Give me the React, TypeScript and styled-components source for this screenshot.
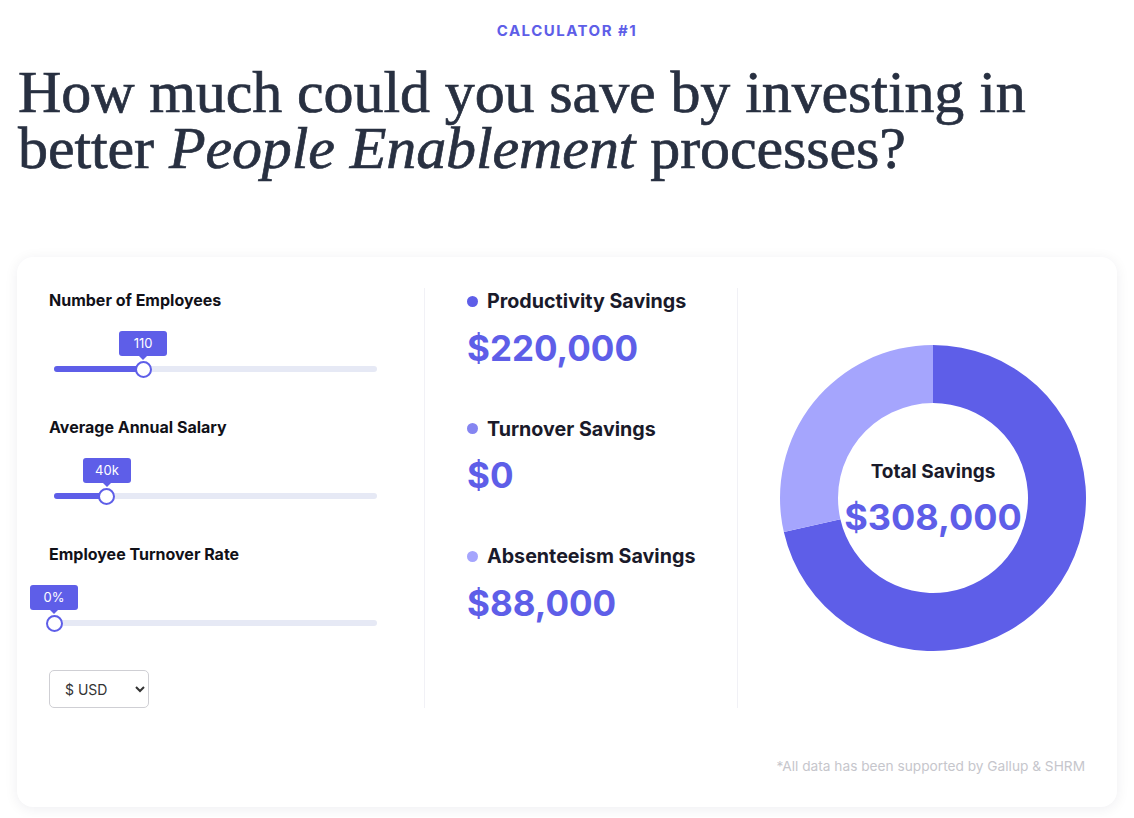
import React from 'react';
import styled, { createGlobalStyle } from 'styled-components';

const GlobalStyle = createGlobalStyle`
  * { box-sizing: border-box; }
  body {
    margin: 0;
    background: #ffffff;
    font-family: Inter, "Noto Sans", sans-serif;
  }
`;

const PURPLE = '#5e5ee8';
const PURPLE_MID = '#8585f1';
const PURPLE_LIGHT = '#a5a5fd';

const Page = styled.div`
  padding: 20px 17px 10px;
`;

const Eyebrow = styled.div`
  text-align: center;
  color: ${PURPLE};
  font-size: 15px;
  font-weight: 700;
  letter-spacing: 1.5px;
  line-height: 22px;
`;

const Headline = styled.h1`
  margin: 22px 0 0 1px;
  font-family: "Liberation Serif", serif;
  font-weight: 400;
  font-size: 60px;
  line-height: 56px;
  color: #283041;
  letter-spacing: -0.1px;
  -webkit-text-stroke: 0.7px #283041;
`;

const Card = styled.section`
  margin-top: 81px;
  background: #ffffff;
  border-radius: 16px;
  box-shadow: 0 2px 14px rgba(20, 20, 60, 0.07);
  padding: 31px 32px 33px;
`;

const Columns = styled.div`
  display: grid;
  grid-template-columns: 375px 313px 1fr;
`;

const Column = styled.div<{ $divider?: boolean; $pad?: number }>`
  border-left: ${(p) => (p.$divider ? '1px solid #f1f1f6' : 'none')};
  padding-left: ${(p) => p.$pad ?? 0}px;
`;

const InputsColumn = styled(Column)`
  padding-right: 47px;
`;

const FieldLabel = styled.div`
  font-size: 16px;
  font-weight: 700;
  color: #111118;
  line-height: 24px;
`;

const Field = styled.div`
  margin-bottom: 19px;
`;

const SliderWrap = styled.div`
  position: relative;
  height: 84px;
  margin-left: 5px;
`;

const Track = styled.div`
  position: absolute;
  left: 0;
  right: 0;
  top: 54px;
  height: 6px;
  border-radius: 3px;
  background: #e6e9f5;
`;

const Fill = styled.div`
  position: absolute;
  left: 0;
  top: 0;
  bottom: 0;
  border-radius: 3px;
  background: ${PURPLE};
`;

const Thumb = styled.div`
  position: absolute;
  top: 50%;
  width: 17px;
  height: 17px;
  margin: -8.5px 0 0 -8.5px;
  border-radius: 50%;
  background: #ffffff;
  border: 2px solid ${PURPLE};
`;

const Bubble = styled.div`
  position: absolute;
  top: 19px;
  width: 48px;
  height: 25px;
  margin-left: -24px;
  border-radius: 3px;
  background: ${PURPLE};
  color: #ffffff;
  font-size: 13px;
  line-height: 25px;
  text-align: center;

  &::after {
    content: '';
    position: absolute;
    left: 50%;
    bottom: -4px;
    margin-left: -4px;
    border-left: 4px solid transparent;
    border-right: 4px solid transparent;
    border-top: 4px solid ${PURPLE};
  }
`;

const CurrencySelect = styled.select`
  margin-top: 1px;
  width: 100px;
  height: 38px;
  padding: 0 8px 0 11px;
  border: 1px solid #cfcfd4;
  border-radius: 5px;
  background: #ffffff;
  color: #333333;
  font-family: Inter, sans-serif;
  font-size: 14px;
`;

const Result = styled.div`
  margin-bottom: 44px;
`;

const ResultLabel = styled.div`
  display: flex;
  align-items: center;
  gap: 9px;
  font-size: 19.7px;
  font-weight: 700;
  color: #1a1a2a;
  line-height: 26px;
`;

const Dot = styled.span<{ $color: string }>`
  width: 11px;
  height: 11px;
  border-radius: 50%;
  background: ${(p) => p.$color};
`;

const ResultValue = styled.div`
  margin-top: 9.5px;
  font-size: 35px;
  font-weight: 700;
  color: ${PURPLE};
  line-height: 48px;
`;

const ChartColumn = styled(Column)`
  display: flex;
  justify-content: center;
  align-items: flex-start;
  padding-top: 57px;
  padding-left: 42px;
`;

const Donut = styled.div`
  position: relative;
  width: 306px;
  height: 306px;
`;

const DonutCenter = styled.div`
  position: absolute;
  inset: 0;
  display: flex;
  flex-direction: column;
  align-items: center;
  justify-content: center;
  padding-top: 2px;
`;

const TotalLabel = styled.div`
  font-size: 19px;
  font-weight: 700;
  color: #1a1a2a;
`;

const TotalValue = styled.div`
  margin-top: 12px;
  font-size: 36px;
  font-weight: 700;
  color: ${PURPLE};
`;

const Footnote = styled.div`
  margin-top: 50px;
  text-align: right;
  font-size: 13.7px;
  color: #c6c6cc;
`;

type SliderProps = { label: string; value: string; pct: number };

const Slider: React.FC<SliderProps> = ({ label, value, pct }) => (
  <Field>
    <FieldLabel>{label}</FieldLabel>
    <SliderWrap>
      <Bubble style={{ left: `${pct}%` }}>{value}</Bubble>
      <Track>
        <Fill style={{ width: `${pct}%` }} />
        <Thumb style={{ left: `${pct}%` }} />
      </Track>
    </SliderWrap>
  </Field>
);

const results = [
  { label: 'Productivity Savings', value: '$220,000', color: PURPLE },
  { label: 'Turnover Savings', value: '$0', color: PURPLE_MID },
  { label: 'Absenteeism Savings', value: '$88,000', color: PURPLE_LIGHT },
];

// ring segment from angle a0 to a1 (degrees, clockwise from 12 o'clock)
const arcPath = (a0: number, a1: number, r: number, R: number, c: number) => {
  const pt = (a: number, rad: number) => {
    const t = ((a - 90) * Math.PI) / 180;
    return `${c + rad * Math.cos(t)} ${c + rad * Math.sin(t)}`;
  };
  const large = a1 - a0 > 180 ? 1 : 0;
  return `M ${pt(a0, R)} A ${R} ${R} 0 ${large} 1 ${pt(a1, R)} L ${pt(a1, r)} A ${r} ${r} 0 ${large} 0 ${pt(a0, r)} Z`;
};

const App: React.FC = () => {
  const productivity = 220000;
  const absenteeism = 88000;
  const total = productivity + absenteeism;
  const split = (productivity / total) * 360;

  return (
    <>
      <GlobalStyle />
      <Page>
        <Eyebrow>CALCULATOR #1</Eyebrow>
        <Headline>
          How much could you save by investing in
          <br />
          better <em>People Enablement</em> processes?
        </Headline>

        <Card>
          <Columns>
            <InputsColumn>
              <Slider label="Number of Employees" value="110" pct={27.6} />
              <Slider label="Average Annual Salary" value="40k" pct={16.4} />
              <Slider label="Employee Turnover Rate" value="0%" pct={0} />
              <CurrencySelect defaultValue="usd">
                <option value="usd">$ USD</option>
                <option value="eur">€ EUR</option>
                <option value="gbp">£ GBP</option>
              </CurrencySelect>
            </InputsColumn>

            <Column $divider $pad={42}>
              {results.map((r) => (
                <Result key={r.label}>
                  <ResultLabel>
                    <Dot $color={r.color} />
                    {r.label}
                  </ResultLabel>
                  <ResultValue>{r.value}</ResultValue>
                </Result>
              ))}
            </Column>

            <ChartColumn $divider>
              <Donut>
                <svg width="306" height="306" viewBox="0 0 306 306">
                  <path d={arcPath(0, split, 95, 153, 153)} fill={PURPLE} />
                  <path d={arcPath(split, 360, 95, 153, 153)} fill={PURPLE_LIGHT} />
                </svg>
                <DonutCenter>
                  <TotalLabel>Total Savings</TotalLabel>
                  <TotalValue>$308,000</TotalValue>
                </DonutCenter>
              </Donut>
            </ChartColumn>
          </Columns>
          <Footnote>*All data has been supported by Gallup &amp; SHRM</Footnote>
        </Card>
      </Page>
    </>
  );
};

export default App;
